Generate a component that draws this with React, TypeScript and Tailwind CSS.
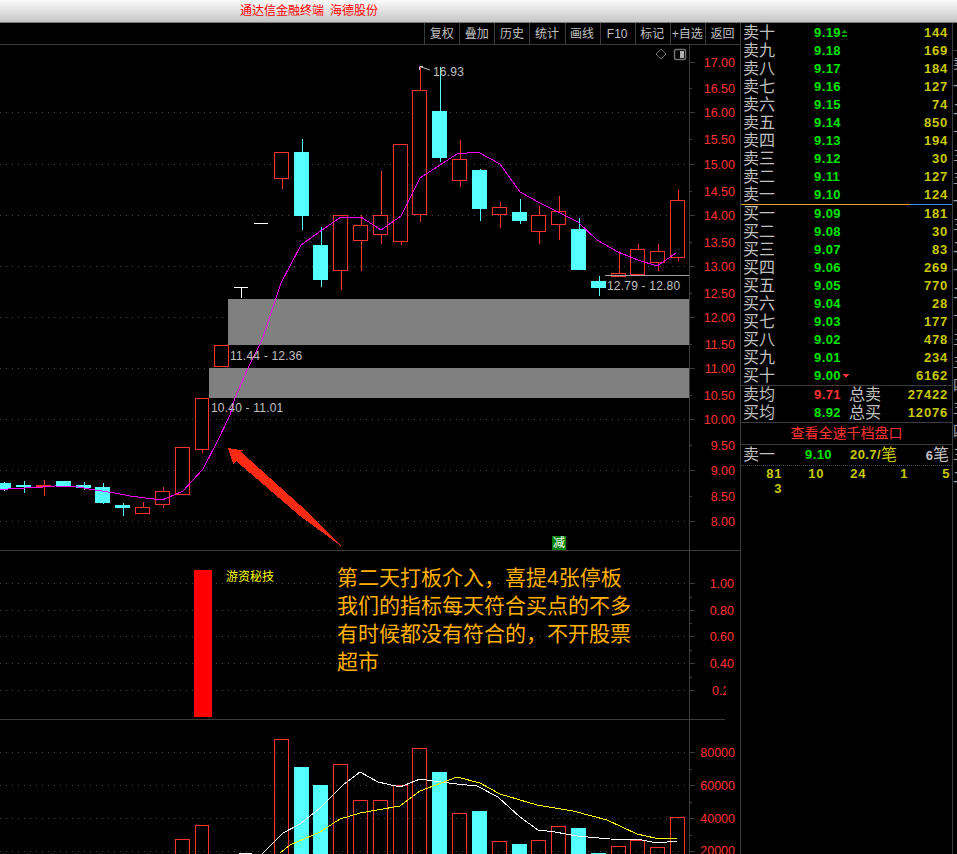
import React from 'react';

const RED = '#ff3232';
const CYAN = '#54ffff';
const GRID = '#4a4a4a';
const LINE = '#3c3c3c';
const NUM_FONT = '"Liberation Sans", Arial, sans-serif';

// x0, x1, top, bottom, wickTop, wickBottom, up(hollow red) or down(cyan)
type Candle = [number, number, number, number, number, number, 'r' | 'c'];

const candles: Candle[] = [
  [-4, 11, 483, 489, 482, 491, 'c'],
  [16, 31, 485, 487, 481, 493, 'c'],
  [36, 51, 485, 487, 480, 496, 'r'],
  [56, 71, 481, 486, 481, 486, 'c'],
  [76, 91, 485, 488, 482, 490, 'c'],
  [95, 110, 487, 503, 483, 504, 'c'],
  [115, 130, 505, 508, 503, 516, 'c'],
  [135, 150, 507, 514, 502, 514, 'r'],
  [155, 170, 491, 505, 487, 508, 'r'],
  [175, 190, 447, 495, 447, 495, 'r'],
  [195, 209, 398, 450, 398, 453, 'r'],
  [214, 229, 345, 367, 345, 367, 'r'],
  [274, 289, 152, 179, 152, 189, 'r'],
  [294, 309, 152, 216, 139, 230, 'c'],
  [313, 328, 245, 280, 227, 287, 'c'],
  [333, 348, 215, 271, 215, 290, 'r'],
  [353, 368, 225, 241, 215, 271, 'r'],
  [373, 388, 215, 235, 171, 244, 'r'],
  [393, 408, 144, 242, 144, 245, 'r'],
  [412, 427, 90, 215, 67, 222, 'r'],
  [432, 447, 111, 158, 67, 162, 'c'],
  [452, 467, 159, 181, 140, 187, 'r'],
  [472, 487, 170, 209, 169, 221, 'c'],
  [492, 507, 207, 215, 202, 228, 'r'],
  [512, 527, 212, 221, 199, 224, 'c'],
  [531, 546, 215, 232, 206, 244, 'r'],
  [551, 566, 211, 225, 196, 240, 'r'],
  [571, 586, 229, 270, 218, 270, 'c'],
  [591, 606, 281, 288, 276, 296, 'c'],
  [611, 626, 273, 277, 251, 277, 'r'],
  [630, 645, 249, 275, 244, 275, 'r'],
  [650, 665, 251, 263, 244, 271, 'r'],
  [670, 685, 200, 258, 190, 261, 'r'],
];

const maLine =
  '0,489.5 25,488 43,487 55,486 75,486.5 95,490 115,493 130,496 145,498 162,500 167,498 183,491 203,469 217,442 230,415 235,398 248,368 262,340 276,298 281,283 301,245 322,230 341,217 361,217 381,230 401,216 420,178 457,154 478,152 500,164 520,192 540,203 560,213 578,222 597,240 618,252 638,260 657,266 676,253';

const priceTicks: [string, number][] = [
  ['17.00', 62], ['16.50', 88], ['16.00', 112], ['15.50', 139], ['15.00', 164], ['14.50', 191],
  ['14.00', 215], ['13.50', 242], ['13.00', 266], ['12.50', 293], ['12.00', 317], ['11.50', 344],
  ['11.00', 368], ['10.50', 395], ['10.00', 419], ['9.50', 445], ['9.00', 470], ['8.50', 496], ['8.00', 521],
];
const priceGrid = [112, 164, 215, 266, 317, 368, 419, 470, 521];

// x0, x1, top, kind
const volumes: [number, number, number, 'r' | 'c' | 'w'][] = [
  [175, 190, 839, 'r'], [195, 209, 825, 'r'], [239, 252, 853, 'w'], [274, 289, 739, 'r'],
  [294, 309, 767, 'c'], [313, 328, 785, 'c'], [333, 348, 764, 'r'], [353, 368, 800, 'r'],
  [373, 388, 800, 'r'], [393, 408, 785, 'r'], [412, 427, 748, 'r'], [432, 447, 772, 'c'],
  [452, 467, 813, 'r'], [472, 487, 811, 'c'], [492, 507, 841, 'r'], [512, 527, 844, 'c'],
  [531, 546, 840, 'r'], [551, 566, 826, 'r'], [571, 586, 828, 'c'], [591, 606, 853, 'c'],
  [611, 626, 846, 'r'], [630, 645, 840, 'r'], [650, 665, 847, 'r'], [670, 685, 817, 'r'],
];
const volWhite =
  '262,854 283,833 300,824 320,808 343,785 360,772 378,782 400,787 420,779 433,781 457,784 477,786 498,797 520,817 538,830 555,832 577,836 610,839 640,839.5 657,843 677,841';
const volYellow =
  '280,853 290,845 320,832 340,819 360,813 400,806 420,791 457,777 480,783 500,794 537,805 573,811 607,820 637,834 655,838 677,838';

const sells = [
  ['卖十', '9.19', '144'], ['卖九', '9.18', '169'], ['卖八', '9.17', '184'], ['卖七', '9.16', '127'], ['卖六', '9.15', '74'],
  ['卖五', '9.14', '850'], ['卖四', '9.13', '194'], ['卖三', '9.12', '30'], ['卖二', '9.11', '127'], ['卖一', '9.10', '124'],
];
const buys = [
  ['买一', '9.09', '181'], ['买二', '9.08', '30'], ['买三', '9.07', '83'], ['买四', '9.06', '269'], ['买五', '9.05', '770'],
  ['买六', '9.04', '28'], ['买七', '9.03', '177'], ['买八', '9.02', '478'], ['买九', '9.01', '234'], ['买十', '9.00', '6162'],
];
const tools = ['复权', '叠加', '历史', '统计', '画线', 'F10', '标记', '+自选', '返回'];
const edge = ['卖', '一', '二', '十', '三', '五', '一', '三', '二', '一', '二', '十', '三', '五', '四', '五', '四', '三', '二'];

const Hline = ({ y, x1 = 0, x2 = 689 }: { y: number; x1?: number; x2?: number }) => (
  <line x1={x1} x2={x2} y1={y + 0.5} y2={y + 0.5} stroke={GRID} strokeDasharray="1 5" />
);

const AxisLabel = ({ y, x, children }: { y: number; x: number; children: React.ReactNode }) => (
  <text x={x} y={y + 5} fill={RED} fontSize={12.5} fontFamily={NUM_FONT} textAnchor="end">
    {children}
  </text>
);

const Note = ({ x, y, children }: { x: number; y: number; children: React.ReactNode }) => (
  <text x={x} y={y + 5} fill="#c0c0c0" fontSize={12} letterSpacing={0.2} fontFamily={NUM_FONT}>
    {children}
  </text>
);

const Row = ({ label, price, vol, mark }: { label: string; price: string; vol: string; mark?: 'up' | 'down' }) => (
  <div className="h-[18px] flex items-center pl-[2px] pr-[4px]">
    <span className="w-[71px] text-[16px] leading-[18px] text-[#c0c0c0]">{label}</span>
    <span className="w-[28px] text-[13px] font-bold tracking-[0.4px] text-[#00e600]">{price}</span>
    <span className="w-[10px] flex">
      {mark === 'up' && (
        <svg width="5" height="7" viewBox="0 0 5 7" shapeRendering="crispEdges">
          <path d="M2.5 0 L5 3 H0 Z M0 5 H5 V7 H0 Z" fill="#00a000" />
        </svg>
      )}
      {mark === 'down' && (
        <svg width="6" height="4" viewBox="0 0 6 4" className="ml-[1px]" shapeRendering="crispEdges">
          <path d="M0 0 H6 L3 4 Z" fill={RED} />
        </svg>
      )}
    </span>
    <span className="flex-1 text-right text-[13px] font-bold tracking-[0.8px] text-[#c8c800]">{vol}</span>
  </div>
);

export default function App() {
  return (
    <div
      className="w-[957px] h-[854px] bg-black flex flex-col overflow-hidden"
      style={{ fontFamily: '"Liberation Sans", "Noto Sans CJK SC", sans-serif' }}
    >
      {/* title bar */}
      <div className="h-[23px] shrink-0 bg-gradient-to-b from-[#fbfbfb] to-[#c6c6c6] border-b border-[#7c7c7c] pl-[240px] flex items-center gap-[6px] text-[12px] text-[#ff0000]">
        <span>通达信金融终端</span>
        <span>海德股份</span>
      </div>

      <div className="flex flex-1 min-h-0">
        {/* chart column */}
        <div className="w-[740px] shrink-0 flex flex-col">
          <div className="h-[22px] shrink-0 border-b border-[#3c3c3c] flex justify-end">
            {tools.map((t) => (
              <div
                key={t}
                className="w-[35.1px] pt-[1px] pr-[1px] flex items-center justify-center border-l border-[#3c3c3c] text-[12px] text-[#c0c0c0] whitespace-nowrap"
              >
                {t}
              </div>
            ))}
          </div>

          {/* price pane */}
          <div className="relative h-[506px] shrink-0 border-b border-[#3c3c3c]">
            <svg width="740" height="505" viewBox="0 45 740 505" className="block">
              <g shapeRendering="crispEdges">
                {priceGrid.map((y) => (
                  <Hline key={y} y={y} />
                ))}
                <rect x="228" y="299" width="461" height="46" fill="#808080" />
                <rect x="209" y="368" width="480" height="30" fill="#808080" />
                <line x1="689.5" x2="689.5" y1="45" y2="550" stroke={LINE} />
                {priceTicks.map(([l, y], i) => (
                  <line key={l} x1="689" x2={i % 2 === 0 ? 695 : 692} y1={y + 0.5} y2={y + 0.5} stroke={LINE} />
                ))}
                {candles.map(([x0, x1, top, bot, wt, wb, k], i) => {
                  const cx = Math.round((x0 + x1) / 2);
                  const c = k === 'r' ? RED : CYAN;
                  return (
                    <g key={i}>
                      <rect x={cx} y={wt} width={1} height={wb - wt} fill={c} />
                      {k === 'r' ? (
                        <rect x={x0 + 0.5} y={top + 0.5} width={x1 - x0 - 1} height={bot - top - 1} fill="#000000" stroke={c} />
                      ) : (
                        <rect x={x0} y={top} width={x1 - x0} height={bot - top} fill={c} />
                      )}
                    </g>
                  );
                })}
                {/* limit up T and flat bars */}
                <path d="M234 287.5 H248 M241.5 287 V298 M254 223.5 H268" stroke="#ffffff" fill="none" />
                <line x1="605" x2="689" y1="275.5" y2="275.5" stroke="#a0a0a0" />
                <polyline points={maLine} fill="none" stroke="#ff00ff" />
                <polygon points="228,448 246,451 240,451 300,505 341,546 300,516 236,461 233,464" fill="#ff2a14" />
              </g>

              {/* high marker */}
              <path d="M419.5 70 V66.5 H423 M421 67 L430 70" stroke="#c0c0c0" fill="none" />
              <Note x={433} y={71}>16.93</Note>
              <Note x={230} y={355}>11.44 - 12.36</Note>
              <Note x={211} y={407}>10.40 - 11.01</Note>
              <Note x={607} y={285}>12.79 - 12.80</Note>

              {/* corner tools */}
              <path d="M661 49 L666 54 L661 59 L656 54 Z" fill="none" stroke="#707070" />
              <rect x="674.5" y="49.5" width="11" height="10" rx="1.5" fill="none" stroke="#707070" strokeWidth="1.5" />
              <rect x="680" y="51" width="4" height="7" fill="#b0b0b0" />

              {priceTicks.map(([l, y]) => (
                <AxisLabel key={l} x={735} y={y}>{l}</AxisLabel>
              ))}
            </svg>
            <span className="absolute left-[552px] top-[491px] w-[14px] h-[14px] bg-[#008000] text-white text-[12px] leading-[14px] text-center">
              减
            </span>
          </div>

          {/* signal pane */}
          <div className="relative h-[169px] shrink-0">
            <svg width="740" height="169" viewBox="0 551 740 169" className="block">
              <g shapeRendering="crispEdges">
                {[583, 610, 636, 663, 690].map((y) => (
                  <g key={y}>
                    <Hline y={y} />
                    <line x1="689" x2="695" y1={y + 0.5} y2={y + 0.5} stroke={LINE} />
                  </g>
                ))}
                {[597, 623, 650, 677].map((y) => (
                  <line key={y} x1="689" x2="692" y1={y + 0.5} y2={y + 0.5} stroke={LINE} />
                ))}
                <line x1="689.5" x2="689.5" y1="551" y2="720" stroke={LINE} />
                <line x1="0" x2="725" y1="719.5" y2="719.5" stroke={LINE} />
                <rect x="194" y="570" width="18" height="147" fill="#ff0000" />
              </g>
              <AxisLabel x={734} y={583}>1.00</AxisLabel>
              <AxisLabel x={734} y={610}>0.80</AxisLabel>
              <AxisLabel x={734} y={636}>0.60</AxisLabel>
              <AxisLabel x={734} y={663}>0.40</AxisLabel>
              <text x={712} y={695} fill={RED} fontSize={12.5} fontFamily={NUM_FONT}>0.2</text>
              <rect x="726" y="680" width="13" height="20" fill="#000000" />
            </svg>
            <span className="absolute left-[226px] top-[18px] text-[12px] leading-[16px] text-[#ffff00]">游资秘技</span>
            <div className="absolute left-[337px] top-[13px] w-[300px] text-[21px] leading-[28px] text-[#ffb000]">
              <p className="whitespace-nowrap">第二天打板介入，喜提4张停板</p>
              <p className="whitespace-nowrap">我们的指标每天符合买点的不多</p>
              <p className="whitespace-nowrap">有时候都没有符合的，不开股票</p>
              <p className="whitespace-nowrap">超市</p>
            </div>
          </div>

          {/* volume pane */}
          <div className="h-[134px] shrink-0">
            <svg width="740" height="134" viewBox="0 720 740 134" className="block">
              <g shapeRendering="crispEdges">
                {[752, 785, 818, 851].map((y) => (
                  <g key={y}>
                    <Hline y={y} />
                    <line x1="689" x2="695" y1={y + 0.5} y2={y + 0.5} stroke={LINE} />
                  </g>
                ))}
                <line x1="689.5" x2="689.5" y1="720" y2="854" stroke={LINE} />
                {[769, 802, 835].map((y) => (
                  <line key={y} x1="689" x2="692" y1={y + 0.5} y2={y + 0.5} stroke={LINE} />
                ))}
                {volumes.map(([x0, x1, top, k], i) =>
                  k === 'r' ? (
                    <rect key={i} x={x0 + 0.5} y={top + 0.5} width={x1 - x0 - 1} height={860 - top} fill="none" stroke={RED} />
                  ) : (
                    <rect key={i} x={x0} y={top} width={x1 - x0} height={854 - top} fill={k === 'c' ? CYAN : '#ffffff'} />
                  ),
                )}
                <polyline points={volWhite} fill="none" stroke="#ffffff" />
                <polyline points={volYellow} fill="none" stroke="#ffff00" />
              </g>
              <AxisLabel x={735} y={752}>80000</AxisLabel>
              <AxisLabel x={735} y={785}>60000</AxisLabel>
              <AxisLabel x={735} y={818}>40000</AxisLabel>
              <AxisLabel x={735} y={850}>20000</AxisLabel>
            </svg>
          </div>
        </div>

        {/* order book */}
        <div className="w-[213px] shrink-0 border-l border-r border-[#3c3c3c] flex flex-col pt-[1px]">
          {sells.map(([l, p, v], i) => (
            <Row key={l} label={l} price={p} vol={v} mark={i === 0 ? 'up' : undefined} />
          ))}
          <div className="h-[1px] flex">
            <div className="w-[169px] bg-[#e8a030]" />
            <div className="flex-1 bg-[#3a8fe0]" />
          </div>
          {buys.map(([l, p, v], i) => (
            <Row key={l} label={l} price={p} vol={v} mark={i === 9 ? 'down' : undefined} />
          ))}
          <div className="border-t border-[#3c3c3c]">
            <div className="h-[18px] flex items-center pl-[2px] pr-[4px]">
              <span className="w-[71px] text-[16px] leading-[18px] text-[#c0c0c0]">卖均</span>
              <span className="w-[35px] text-[13px] font-bold tracking-[0.4px] text-[#ff3232]">9.71</span>
              <span className="text-[16px] leading-[18px] text-[#c0c0c0]">总卖</span>
              <span className="flex-1 text-right text-[13px] font-bold tracking-[0.8px] text-[#c8c800]">27422</span>
            </div>
            <div className="h-[18px] flex items-center pl-[2px] pr-[4px]">
              <span className="w-[71px] text-[16px] leading-[18px] text-[#c0c0c0]">买均</span>
              <span className="w-[35px] text-[13px] font-bold tracking-[0.4px] text-[#00e600]">8.92</span>
              <span className="text-[16px] leading-[18px] text-[#c0c0c0]">总买</span>
              <span className="flex-1 text-right text-[13px] font-bold tracking-[0.8px] text-[#c8c800]">12076</span>
            </div>
          </div>
          <div className="h-[21px] border-t border-b border-[#3c3c3c] box-content flex items-center justify-center text-[14px] leading-[21px] text-[#ff3232]">
            查看全速千档盘口
          </div>
          <div className="h-[20px] flex items-center pl-[2px] pr-[3px] border-b border-dotted border-[#4a4a4a] box-content">
            <span className="w-[62px] text-[16px] leading-[18px] text-[#c0c0c0]">卖一</span>
            <span className="w-[45px] text-[13px] font-bold tracking-[0.4px] text-[#00e600]">9.10</span>
            <span className="text-[13px] font-bold tracking-[0.4px] text-[#c8c800]">20.7/</span>
            <span className="text-[16px] leading-[18px] text-[#c8c800]">笔</span>
            <span className="flex-1 text-right text-[13px] font-bold text-[#c0c0c0]">
              6<span className="text-[16px] font-normal">笔</span>
            </span>
          </div>
          <div className="grid grid-cols-[41px_42px_42px_42px_42px] text-right text-[13px] leading-[15px] font-bold tracking-[0.6px] text-[#c8c800]">
            <span>81</span>
            <span>10</span>
            <span>24</span>
            <span>1</span>
            <span>5</span>
            <span>3</span>
          </div>
        </div>

        {/* clipped next column */}
        <div className="flex-1 overflow-hidden pt-[27px]">
          <div className="border-t border-[#3c3c3c] pt-[1px]">
            {edge.map((c, i) => (
              <div key={i} className="h-[23px] w-[14px] text-[14px] leading-[23px] text-[#a0a0a0]">
                {c}
              </div>
            ))}
          </div>
        </div>
      </div>
    </div>
  );
}
